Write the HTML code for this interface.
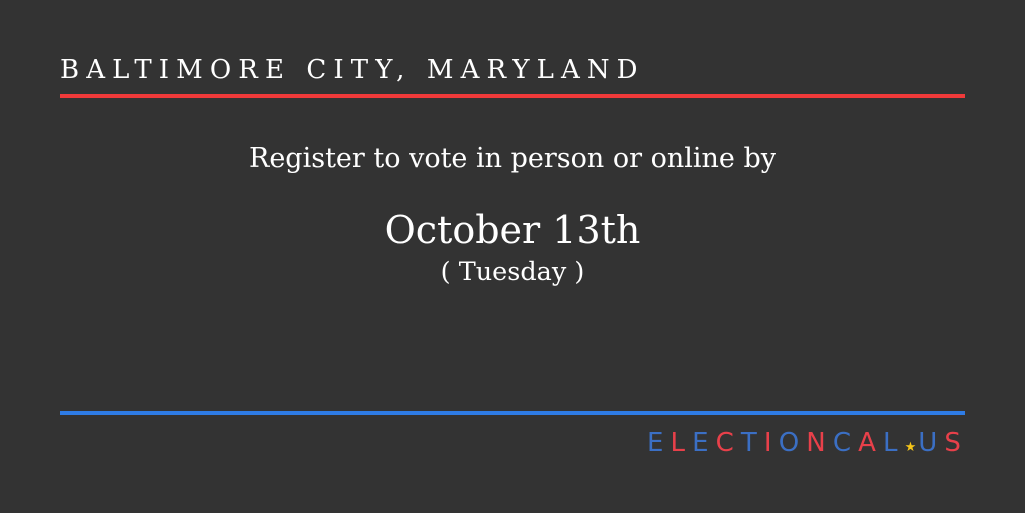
<html><head><style>
body{margin:0;width:1025px;height:513px;background:#333;overflow:hidden;position:relative;font-family:"DejaVu Serif","Liberation Serif",serif;color:#fff}
.h{position:absolute;left:60px;top:55px;font-size:26px;letter-spacing:7.1px;white-space:nowrap}
.r{position:absolute;left:60px;top:94px;width:905px;height:4px;background:#f03a3a}
.b{position:absolute;left:60px;top:411px;width:905px;height:4px;background:#2e7ce6}
.c{position:absolute;left:0;width:1025px;text-align:center;white-space:nowrap}
.logo{position:absolute;left:647px;top:428px;font-family:"DejaVu Sans","Liberation Sans",sans-serif;font-weight:400;font-size:26px;letter-spacing:7.1px;color:#e8404a;white-space:nowrap}
.logo span{color:#3b6fc4}
</style></head><body>
<div class="h">BALTIMORE CITY, MARYLAND</div>
<div class="r"></div>
<div class="c" style="top:143px;font-size:27px;font-weight:300">Register to vote in person or online by</div>
<div class="c" style="top:208px;font-size:38px">October 13th</div>
<div class="c" style="top:257px;font-size:25.5px">( Tuesday )</div>
<div class="b"></div>
<div class="logo"><span>E</span>L<span>E</span>C<span>T</span>I<span>O</span>N<span>C</span>A<span>L</span><b style="color:#f5c518;font-size:13px;letter-spacing:2px">★</b><span>U</span>S</div>
</body></html>
